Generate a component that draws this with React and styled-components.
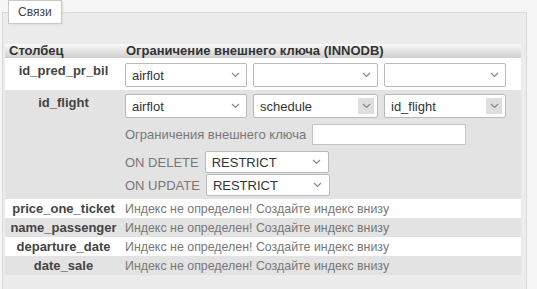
import React from 'react';
import styled, { createGlobalStyle } from 'styled-components';

const Global = createGlobalStyle`
  html, body {
    margin: 0;
    padding: 0;
    background: #f6f6f6;
    font-family: "Liberation Sans", Arial, sans-serif;
    font-size: 13px;
    color: #333;
  }
`;

const Fieldset = styled.fieldset`
  margin: 0 10px 0 2px;
  padding: 20px 5px 8px 2px;
  border: 1px solid #d8d8d8;
  background: #ececec;
  min-height: 270px;
`;

const Legend = styled.legend`
  margin-left: 3px;
  padding: 4px 9px;
  background: #fff;
  border: 1px solid #c8c8c8;
  box-shadow: 1px 1px 2px #ddd;
  font-size: 12px;
  color: #444;
`;

const Table = styled.table`
  width: 100%;
  border-collapse: collapse;
`;

const Th = styled.th`
  text-align: left;
  padding: 0 4px;
  height: 14px;
  line-height: 14px;
  font-weight: bold;
  color: #333;
  background: linear-gradient(#fafafa, #cfcfcf);
  white-space: nowrap;
`;

const Row = styled.tr`
  background: ${p => (p.$odd ? '#fff' : '#e3e3e3')};
`;

const Name = styled.td`
  width: 109px;
  padding: ${p => (p.$top ? '5px 4px 0' : '0 4px')};
  vertical-align: ${p => (p.$top ? 'top' : 'middle')};
  text-align: center;
  font-weight: bold;
  color: #444;
  white-space: nowrap;
  height: ${p => (p.$top ? 'auto' : '19px')};
  line-height: 15px;
`;

const Cell = styled.td`
  padding: ${p => (p.$pad ? '4px 3px 3px' : '0 3px')};
  color: #777;
  vertical-align: top;
`;

const SimpleCell = styled(Cell)`
  vertical-align: middle;
  white-space: nowrap;
  font-size: 12.4px;
`;

const Line = styled.div`
  display: flex;
  align-items: center;
  gap: 6px;
  margin-top: ${p => p.$mt || 0}px;
`;

const SelectBox = styled.div`
  box-sizing: border-box;
  width: ${p => p.$w || 122}px;
  height: ${p => p.$h || 24}px;
  display: flex;
  align-items: center;
  justify-content: space-between;
  padding: 0 3px 0 6px;
  background: #fff;
  border: 1px solid #b9b9b9;
  border-radius: 2px;
  color: #333;
`;

const Arrow = styled.span`
  width: 16px;
  height: 16px;
  display: flex;
  align-items: center;
  justify-content: center;
  background: ${p => (p.$boxed ? '#dedede' : 'transparent')};
`;

const TextInput = styled.div`
  box-sizing: border-box;
  width: 154px;
  height: 21px;
  background: #fff;
  border: 1px solid #c4c4c4;
`;

const Caption = styled.span`
  color: #777;
  white-space: nowrap;
`;

const Chevron = () => (
  <svg width="9" height="6" viewBox="0 0 9 6">
    <path d="M1 1l3.5 3.5L8 1" fill="none" stroke="#888" strokeWidth="1.2" />
  </svg>
);

const Select = ({ value, boxed, w, h }) => (
  <SelectBox $w={w} $h={h}>
    <span>{value}</span>
    <Arrow $boxed={boxed}>
      <Chevron />
    </Arrow>
  </SelectBox>
);

const noIndex = ['price_one_ticket', 'name_passenger', 'departure_date', 'date_sale'];

export default function App() {
  return (
    <>
      <Global />
      <Fieldset>
        <Legend>Связи</Legend>
        <Table>
          <thead>
            <tr>
              <Th>Столбец</Th>
              <Th>Ограничение внешнего ключа (INNODB)</Th>
            </tr>
          </thead>
          <tbody>
            <Row $odd>
              <Name $top>id_pred_pr_bil</Name>
              <Cell $pad>
                <Line $mt={1}>
                  <Select value="airflot" />
                  <Select value="" w={125} />
                  <Select value="" />
                </Line>
              </Cell>
            </Row>
            <Row>
              <Name $top>id_flight</Name>
              <Cell $pad>
                <Line>
                  <Select value="airflot" />
                  <Select value="schedule" w={125} boxed />
                  <Select value="id_flight" boxed />
                </Line>
                <Line $mt={6}>
                  <Caption>Ограничения внешнего ключа</Caption>
                  <TextInput />
                </Line>
                <Line $mt={6}>
                  <Caption>ON DELETE</Caption>
                  <Select value="RESTRICT" w={124} h={22} />
                </Line>
                <Line $mt={1}>
                  <Caption>ON UPDATE</Caption>
                  <Select value="RESTRICT" w={124} h={22} />
                </Line>
              </Cell>
            </Row>
            {noIndex.map((name, i) => (
              <Row key={name} $odd={i % 2 === 0}>
                <Name>{name}</Name>
                <SimpleCell>Индекс не определен! Создайте индекс внизу</SimpleCell>
              </Row>
            ))}
          </tbody>
        </Table>
      </Fieldset>
    </>
  );
}
